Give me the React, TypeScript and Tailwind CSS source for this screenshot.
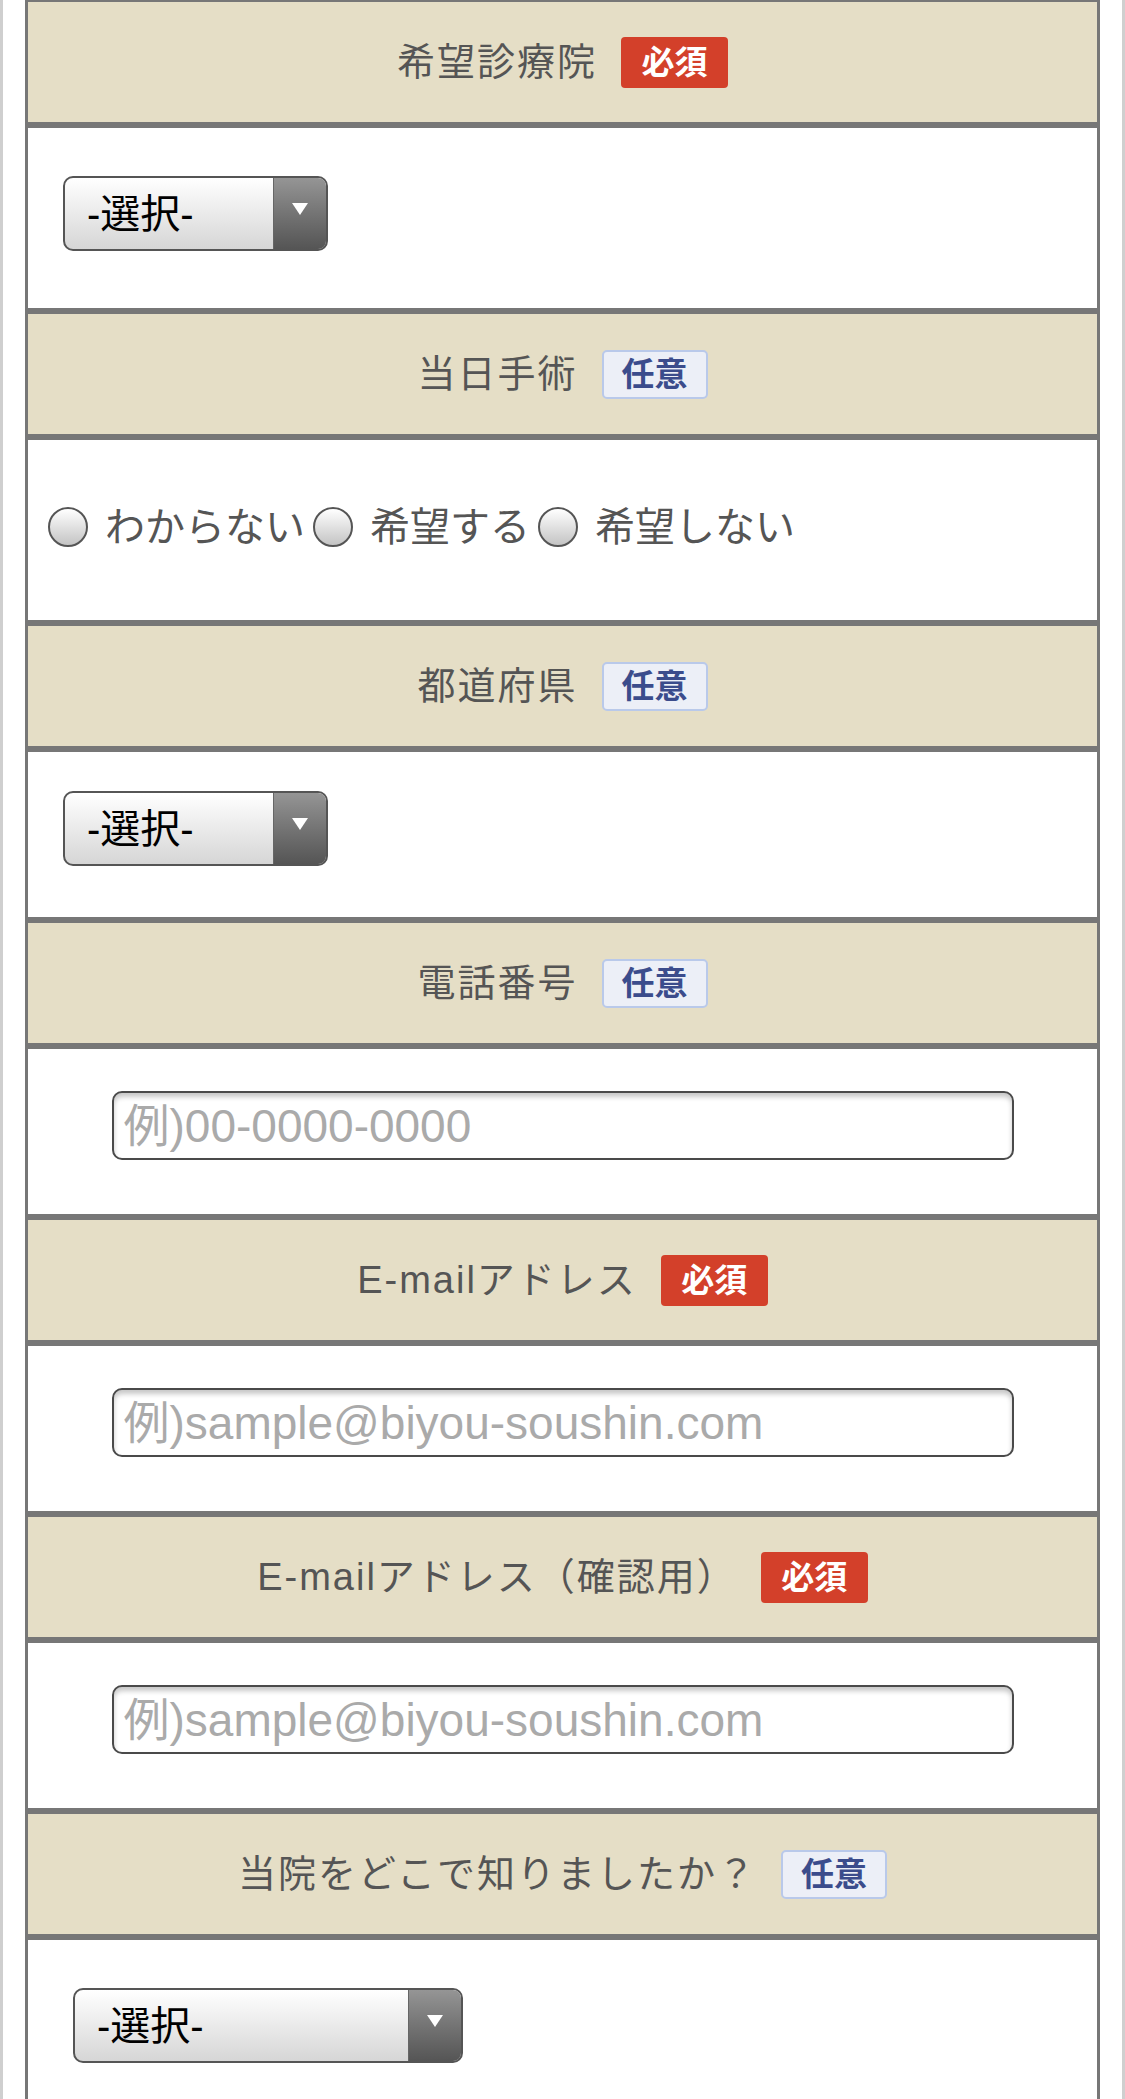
import React from "react";

type Badge = "required" | "optional";

function Tag({ kind }: { kind: Badge }) {
    if (kind === "required") {
        return (
            <span className="ml-[24px] flex h-[51px] w-[107px] items-center justify-center rounded-[4px] bg-[#d3402a] text-[33px] font-bold leading-none text-white">
                必須
            </span>
        );
    }
    return (
        <span className="ml-[24px] flex h-[49px] w-[106px] items-center justify-center rounded-[5px] border-2 border-[#b9c9ea] bg-[#eceff7] text-[33px] font-bold leading-none text-[#3b4c8c]">
            任意
        </span>
    );
}

function Head({ label, kind, first }: { label: string; kind: Badge; first?: boolean }) {
    return (
        <div
            className={
                first
                    ? "flex h-[125px] items-center justify-center border-t-2 border-b-[3px] border-[#777] bg-[#e5dec6]"
                    : "flex h-[126px] items-center justify-center border-y-[3px] border-[#777] bg-[#e5dec6]"
            }
        >
            <span className="text-[38px] leading-none tracking-[2px] text-[#555]">{label}</span>
            <Tag kind={kind} />
        </div>
    );
}

function Select({ wide }: { wide?: boolean }) {
    return (
        <div
            className={
                wide
                    ? "flex h-[75px] w-[390px] overflow-hidden rounded-[10px] border-2 border-[#555] bg-gradient-to-b from-white to-[#d6d6d6]"
                    : "flex h-[75px] w-[265px] overflow-hidden rounded-[10px] border-2 border-[#555] bg-gradient-to-b from-white to-[#d6d6d6]"
            }
        >
            <span className="flex flex-1 items-center pl-[22px] text-[40px] leading-none text-black">-選択-</span>
            <span className="flex w-[53px] items-start justify-center border-l border-[#666] bg-gradient-to-b from-[#959595] to-[#555] pt-[25px]">
                <svg width="16" height="12" viewBox="0 0 16 12">
                    <path d="M0 0 L16 0 L8 12 Z" fill="#fff" />
                </svg>
            </span>
        </div>
    );
}

function TextInput({ placeholder }: { placeholder: string }) {
    return (
        <input
            type="text"
            placeholder={placeholder}
            className="mx-auto block h-[69px] w-[902px] rounded-[10px] border-2 border-[#4a4a4a] bg-white px-[10px] font-['Liberation_Sans','Noto_Sans_CJK_JP',sans-serif] text-[46px] leading-none text-[#333] shadow-[inset_0_4px_5px_rgba(0,0,0,0.22)] outline-none placeholder:text-[#aaa]"
        />
    );
}

function Radio({ label, first }: { label: string; first?: boolean }) {
    return (
        <span className={first ? "flex items-center" : "ml-[8px] flex items-center"}>
            <span className="h-10 w-10 rounded-full border-2 border-[#555] bg-gradient-to-b from-white to-[#c4c4c4]" />
            <span className="ml-[17px] text-[40px] leading-none text-[#555]">{label}</span>
        </span>
    );
}

export default function App() {
    return (
        <div className="min-h-screen border-x-[3px] border-[#cfcfcf] bg-white px-[22px] font-['Liberation_Sans','Noto_Sans_CJK_JP',sans-serif]">
            <div className="border-x-[3px] border-[#777]">
                <Head label="希望診療院" kind="required" first />
                <div className="h-[186px] border-y-[3px] border-[#777] pl-[35px] pt-[48px]">
                    <Select />
                </div>

                <Head label="当日手術" kind="optional" />
                <div className="flex h-[186px] items-center border-y-[3px] border-[#777] pb-[6px] pl-[20px]">
                    <Radio label="わからない" first />
                    <Radio label="希望する" />
                    <Radio label="希望しない" />
                </div>

                <Head label="都道府県" kind="optional" />
                <div className="h-[171px] border-y-[3px] border-[#777] pl-[35px] pt-[39px]">
                    <Select />
                </div>

                <Head label="電話番号" kind="optional" />
                <div className="h-[171px] border-y-[3px] border-[#777] pt-[42px]">
                    <TextInput placeholder="例)00-0000-0000" />
                </div>

                <Head label="E-mailアドレス" kind="required" />
                <div className="h-[171px] border-y-[3px] border-[#777] pt-[42px]">
                    <TextInput placeholder="例)sample@biyou-soushin.com" />
                </div>

                <Head label="E-mailアドレス（確認用）" kind="required" />
                <div className="h-[171px] border-y-[3px] border-[#777] pt-[42px]">
                    <TextInput placeholder="例)sample@biyou-soushin.com" />
                </div>

                <Head label="当院をどこで知りましたか？" kind="optional" />
                <div className="h-[186px] border-y-[3px] border-[#777] pl-[45px] pt-[48px]">
                    <Select wide />
                </div>
            </div>
        </div>
    );
}
